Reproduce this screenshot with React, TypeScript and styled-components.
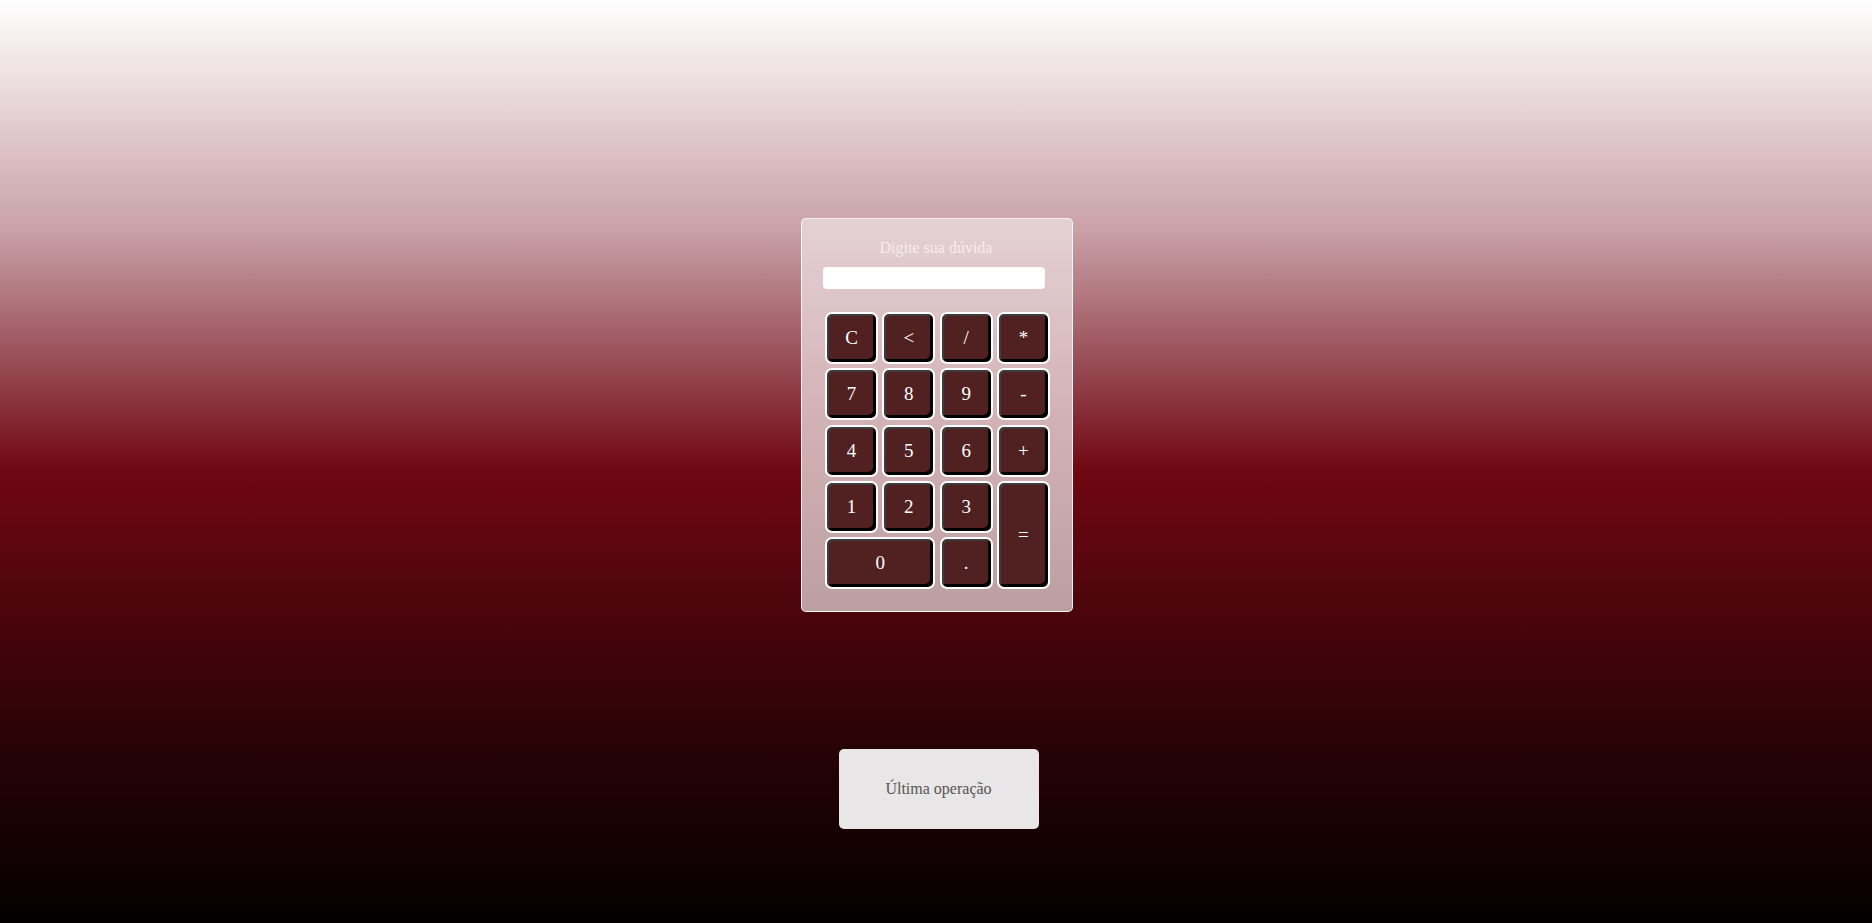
import React from "react";
import styled, { createGlobalStyle } from "styled-components";

const Global = createGlobalStyle`
  html, body { margin: 0; padding: 0; }
  body {
    min-height: 923px;
    background: linear-gradient(to bottom, #ffffff 0%, #c9a1a7 25%, #700712 51%, #2a0306 80%, #030000 100%);
    font-family: "Liberation Serif", "Times New Roman", serif;
  }
`;

const Page = styled.div`
  height: 923px;
  display: flex;
  flex-direction: column;
  align-items: center;
  padding-top: 218px;
  box-sizing: border-box;
`;

const Panel = styled.div`
  width: 272px;
  height: 394px;
  box-sizing: border-box;
  margin-left: 2px;
  border: 1px solid rgba(255, 255, 255, 0.85);
  border-radius: 5px;
  background: linear-gradient(to bottom, #e4d1d4 0%, #d3b2b6 50%, #bc9fa1 100%);
  padding: 19px 0 0 0;
  display: flex;
  flex-direction: column;
  align-items: center;
`;

const Title = styled.div`
  color: #f6ecee;
  font-size: 16px;
  line-height: 20px;
  margin-left: -2px;
`;

const Input = styled.input`
  width: 222px;
  height: 22px;
  box-sizing: border-box;
  border: none;
  border-radius: 4px;
  background: #ffffff;
  margin: 9px 0 0 -7px;
  outline: none;
`;

const Keys = styled.div`
  margin-top: 23px;
  display: grid;
  grid-template-columns: repeat(4, 53px);
  grid-auto-rows: 52px;
  column-gap: 4.3px;
  row-gap: 4.3px;
  margin-left: 1px;
`;

const Key = styled.button<{ $wide?: boolean; $tall?: boolean }>`
  grid-column: ${(p) => (p.$wide ? "span 2" : "span 1")};
  grid-row: ${(p) => (p.$tall ? "span 2" : "span 1")};
  box-sizing: border-box;
  border: 2px solid #ffffff;
  border-radius: 7px;
  background: #512021;
  box-shadow: inset 2px 2px 0 #3c3c3c, inset -3px -3px 0 #000000;
  color: #ffffff;
  font-family: "Liberation Serif", "Times New Roman", serif;
  font-size: 19px;
  padding: 0;
  display: flex;
  align-items: center;
  justify-content: center;
  cursor: pointer;
`;

const Last = styled.div`
  margin-top: 137px;
  margin-left: 5px;
  width: 200px;
  height: 80px;
  border-radius: 5px;
  background: #e8e6e6;
  color: #555555;
  font-size: 16px;
  display: flex;
  align-items: center;
  justify-content: center;
`;

const keys: { label: string; wide?: boolean; tall?: boolean }[] = [
  { label: "C" }, { label: "<" }, { label: "/" }, { label: "*" },
  { label: "7" }, { label: "8" }, { label: "9" }, { label: "-" },
  { label: "4" }, { label: "5" }, { label: "6" }, { label: "+" },
  { label: "1" }, { label: "2" }, { label: "3" }, { label: "=", tall: true },
  { label: "0", wide: true }, { label: "." },
];

export default function App() {
  return (
    <>
      <Global />
      <Page>
        <Panel>
          <Title>Digite sua dúvida</Title>
          <Input type="text" />
          <Keys>
            {keys.map((k) => (
              <Key key={k.label} $wide={k.wide} $tall={k.tall}>
                {k.label}
              </Key>
            ))}
          </Keys>
        </Panel>
        <Last>Última operação</Last>
      </Page>
    </>
  );
}
